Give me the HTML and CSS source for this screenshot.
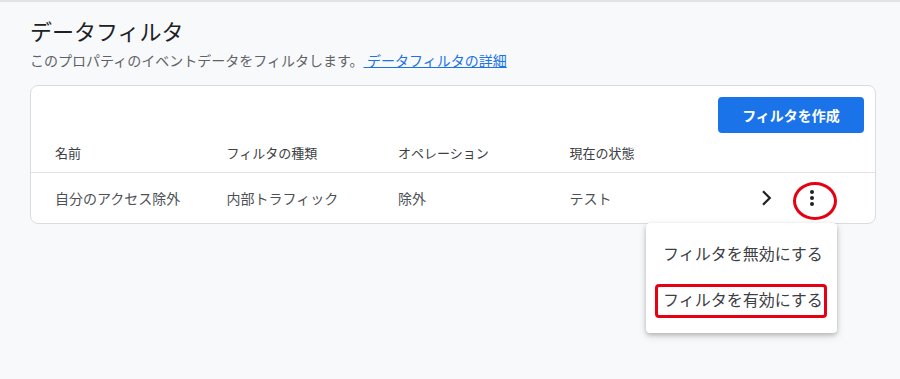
FILE: index.html
```html
<!DOCTYPE html>
<html lang="ja">
<head>
    <meta charset="UTF-8">
    <title>データフィルタ</title>
    <link rel="stylesheet" href="styles.css">
</head>
<body>
<div class="topline"></div>

<div class="page">
    <h1 class="title">データフィルタ</h1>
    <p class="desc">このプロパティのイベントデータをフィルタします。<a href="#" class="desc_link"> データフィルタの詳細</a></p>

    <div class="card">
        <div class="toolbar">
            <button class="btn_create">フィルタを作成</button>
        </div>

        <div class="row head">
            <div class="cell">名前</div>
            <div class="cell">フィルタの種類</div>
            <div class="cell">オペレーション</div>
            <div class="cell">現在の状態</div>
        </div>

        <div class="row item">
            <div class="cell">自分のアクセス除外</div>
            <div class="cell">内部トラフィック</div>
            <div class="cell">除外</div>
            <div class="cell">テスト</div>
            <div class="actions">
                <span class="icon chevron">
                    <svg width="30" height="30" viewBox="0 0 24 24"><path d="M9.6 6.6L15 12l-5.4 5.4" fill="none" stroke="#202124" stroke-width="1.8"/></svg>
                </span>
                <span class="icon kebab">
                    <svg width="24" height="24" viewBox="0 0 24 24" fill="#202124">
                        <circle cx="12" cy="6" r="2"/>
                        <circle cx="12" cy="12" r="2"/>
                        <circle cx="12" cy="18" r="2"/>
                    </svg>
                </span>
            </div>
        </div>
    </div>

    <!-- メニュー -->
    <div class="menu_wrap">
        <div class="menu">
            <div class="menu_item">フィルタを無効にする</div>
            <div class="menu_item marked">フィルタを有効にする</div>
        </div>
    </div>
</div>
</body>
</html>
```

FILE: styles.css
```css
* {
    box-sizing: border-box;
    margin: 0;
    padding: 0;
}

body {
    background-color: #f8f9fa;
    font-family: Roboto, "Noto Sans CJK JP", sans-serif;
    color: #202124;
}

.topline {
    height: 2px;
    background-color: #e3e3e3;
}

.page {
    padding: 0 24px 40px 30px;
}

.title {
    margin-top: 17px;
    font-size: 22px;
    line-height: 28px;
    font-weight: 400;
    color: #202124;
}

.desc {
    margin-top: 4px;
    font-size: 14px;
    line-height: 20px;
    color: #5f6368;
}

.desc_link {
    color: #1a73e8;
    text-decoration: underline;
}

.card {
    margin-top: 14px;
    background-color: #fff;
    border: 1px solid #dadce0;
    border-radius: 8px;
}

.toolbar {
    display: flex;
    justify-content: flex-end;
    padding: 11px 11px 0;
}

.btn_create {
    width: 146px;
    height: 36px;
    border: none;
    border-radius: 4px;
    background-color: #1a73e8;
    color: #fff;
    font-family: Roboto, "Noto Sans CJK JP", sans-serif;
    font-size: 14px;
    font-weight: 700;
}

.row {
    display: flex;
    align-items: center;
    padding: 0 11px 0 24px;
}

.cell {
    width: 171.5px;
    flex-shrink: 0;
}

.head {
    height: 39px;
    font-size: 13px;
    color: #3c4043;
}

.item {
    height: 51px;
    border-top: 1px solid #e3e3e3;
    font-size: 14px;
    color: #4d5156;
}

.actions {
    margin-left: auto;
    display: flex;
    align-items: center;
    gap: 15px;
    padding-right: 36px;
}

.icon {
    display: flex;
    align-items: center;
    justify-content: center;
}

.chevron {
    width: 30px;
    height: 30px;
}

.kebab {
    position: relative;
    width: 32px;
    height: 32px;
}

/* 赤い丸の注記 */
.kebab::after {
    content: "";
    position: absolute;
    left: -3px;
    top: 0;
    width: 38px;
    height: 32px;
    border: 3px solid #e60012;
    border-radius: 50%;
}

.menu_wrap {
    display: flex;
    justify-content: flex-end;
    padding-right: 39px;
    margin-top: -1px;
}

.menu {
    width: 191px;
    padding: 9px 0;
    background-color: #fff;
    border-radius: 4px;
    box-shadow: 0 2px 4px rgba(0, 0, 0, 0.2), 0 3px 10px rgba(0, 0, 0, 0.12);
}

.menu_item {
    position: relative;
    height: 46px;
    line-height: 46px;
    padding-left: 17px;
    font-size: 16px;
    color: #3c4043;
}

.menu_item.marked::after {
    content: "";
    position: absolute;
    left: 9px;
    right: 10px;
    top: 6px;
    bottom: 6px;
    border: 3px solid #e60012;
    border-radius: 4px;
}
```
